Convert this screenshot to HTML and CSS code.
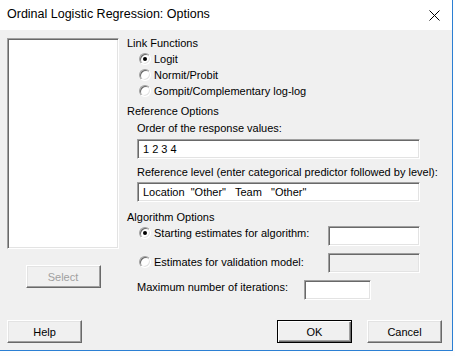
FILE: index.html
```html
<!DOCTYPE html>
<html lang="en">
<head>
  <title>Ordinal Logistic Regression: Options</title>
  <link rel="stylesheet" href="styles.css">
</head>
<body>

  <div class="window">
    <div class="titlebar">
      <span class="title">Ordinal Logistic Regression: Options</span>
      <svg class="close" width="11" height="11" viewBox="0 0 11 11">
        <path d="M0.5 0.5 L10.5 10.5 M10.5 0.5 L0.5 10.5" stroke="#000" stroke-width="1" fill="none"/>
      </svg>
    </div>

    <div class="content">
      <div class="main">
        <div class="left">
          <div class="listbox"></div>
          <div class="button disabled select-btn">Select</div>
        </div>

        <div class="right">
          <div class="label">Link Functions</div>
          <div class="radio-row"><span class="radio checked"></span><span>Logit</span></div>
          <div class="radio-row"><span class="radio"></span><span>Normit/Probit</span></div>
          <div class="radio-row"><span class="radio"></span><span>Gompit/Complementary log-log</span></div>

          <div class="label group">Reference Options</div>
          <div class="label indent">Order of the response values:</div>
          <div class="textbox wide first-box">1 2 3 4</div>
          <div class="label indent ref-level">Reference level (enter categorical predictor followed by level):</div>
          <div class="textbox wide second-box">Location  "Other"   Team   "Other"</div>

          <div class="label algo">Algorithm Options</div>
          <div class="field-row start-row">
            <div class="radio-row"><span class="radio checked"></span><span>Starting estimates for algorithm:</span></div>
            <div class="textbox small"></div>
          </div>
          <div class="field-row valid-row">
            <div class="radio-row"><span class="radio"></span><span>Estimates for validation model:</span></div>
            <div class="textbox small off"></div>
          </div>
          <div class="field-row iter-row">
            <div class="label indent iter-label">Maximum number of iterations:</div>
            <div class="textbox iter"></div>
          </div>
        </div>
      </div>

      <div class="footer">
        <div class="button">Help</div>
        <div class="footer-right">
          <div class="button default">OK</div>
          <div class="button">Cancel</div>
        </div>
      </div>
    </div>
  </div>

</body>
</html>
```

FILE: styles.css
```css
html {
  background: #fdfdfd;
}

body {
  margin: 0;
  font-family: "Liberation Sans", Arial, sans-serif;
  font-size: 11px;
  color: #000;
}

.window {
  width: 452px;
  height: 350px;
  border-right: 1px solid #2b7fd3;
  border-bottom: 1px solid #2b7fd3;
  background: #f0f0f0;
  display: flex;
  flex-direction: column;
}

.titlebar {
  height: 28px;
  background: #fff;
  display: flex;
  align-items: center;
  justify-content: space-between;
  padding: 0 12px 2px 7px;
}

.title {
  font-size: 12.5px;
}

.close {
  margin-top: 2px;
}

.content {
  flex: 1;
  display: flex;
  flex-direction: column;
  padding: 5px 10px 7px 7px;
}

.main {
  display: flex;
  gap: 8px;
}

.left {
  width: 112px;
  display: flex;
  flex-direction: column;
  align-items: center;
  padding-top: 3px;
}

.listbox {
  width: 112px;
  height: 211px;
  box-sizing: border-box;
  background: #fff;
  border: 1px solid;
  border-color: #a0a0a0 #fff #fff #a0a0a0;
  box-shadow: inset 1px 1px #696969, inset -1px -1px #e3e3e3;
}

.button {
  width: 75px;
  height: 23px;
  box-sizing: border-box;
  display: flex;
  align-items: center;
  justify-content: center;
  background: #f0f0f0;
  border: 1px solid;
  border-color: #fff #696969 #696969 #fff;
  box-shadow: inset -1px -1px #a0a0a0, inset 1px 1px #e3e3e3;
}

.button.default {
  border-color: #000;
  box-shadow: inset 1px 1px #fff, inset -1px -1px #696969, inset -2px -2px #a0a0a0;
}

.button.disabled {
  color: #a0a0a0;
}

.select-btn {
  margin-top: 16px;
}

.right {
  flex: 1;
  display: flex;
  flex-direction: column;
}

.label {
  height: 16px;
  line-height: 16px;
  white-space: nowrap;
}

.indent {
  padding-left: 10px;
}

.group {
  margin-top: 4px;
  margin-bottom: 1px;
}

.ref-level {
  margin-top: 5px;
}

.algo {
  margin-top: 7px;
}

.radio-row {
  display: flex;
  align-items: center;
  height: 16px;
  line-height: 16px;
  padding-left: 12px;
  gap: 3px;
  white-space: nowrap;
}

.radio {
  width: 12px;
  height: 12px;
  box-sizing: border-box;
  border-radius: 50%;
  border: 1px solid;
  border-color: #a0a0a0 #fff #fff #a0a0a0;
  background: #fff;
  box-shadow: inset 1px 1px #696969, inset -1px -1px #e3e3e3;
  position: relative;
}

.radio.checked::after {
  content: "";
  position: absolute;
  left: 3px;
  top: 3px;
  width: 4px;
  height: 4px;
  border-radius: 50%;
  background: #000;
}

.textbox {
  height: 20px;
  line-height: 18px;
  box-sizing: border-box;
  background: #fff;
  border: 1px solid;
  border-color: #a0a0a0 #fff #fff #a0a0a0;
  box-shadow: inset 1px 1px #696969, inset -1px -1px #e3e3e3;
  padding-left: 5px;
  white-space: pre;
}

.textbox.off {
  background: #f0f0f0;
}

.wide {
  width: 283px;
  margin-left: 10px;
}

.first-box {
  margin-top: 3px;
}

.second-box {
  margin-top: 2px;
}

.field-row {
  display: flex;
  justify-content: space-between;
  width: 293px;
}

.small {
  width: 92px;
}

.start-row .textbox {
  margin-top: 1px;
}

.valid-row {
  margin-top: 7px;
}

.valid-row .radio-row {
  margin-top: 1px;
}

.iter-row {
  margin-top: 6px;
  justify-content: flex-start;
}

.iter-label {
  width: 177px;
  box-sizing: border-box;
}

.iter {
  width: 67px;
  margin-top: 1px;
}

.footer {
  margin-top: auto;
  display: flex;
  justify-content: space-between;
  align-items: flex-end;
}

.footer-right {
  display: flex;
  gap: 15px;
}
```
